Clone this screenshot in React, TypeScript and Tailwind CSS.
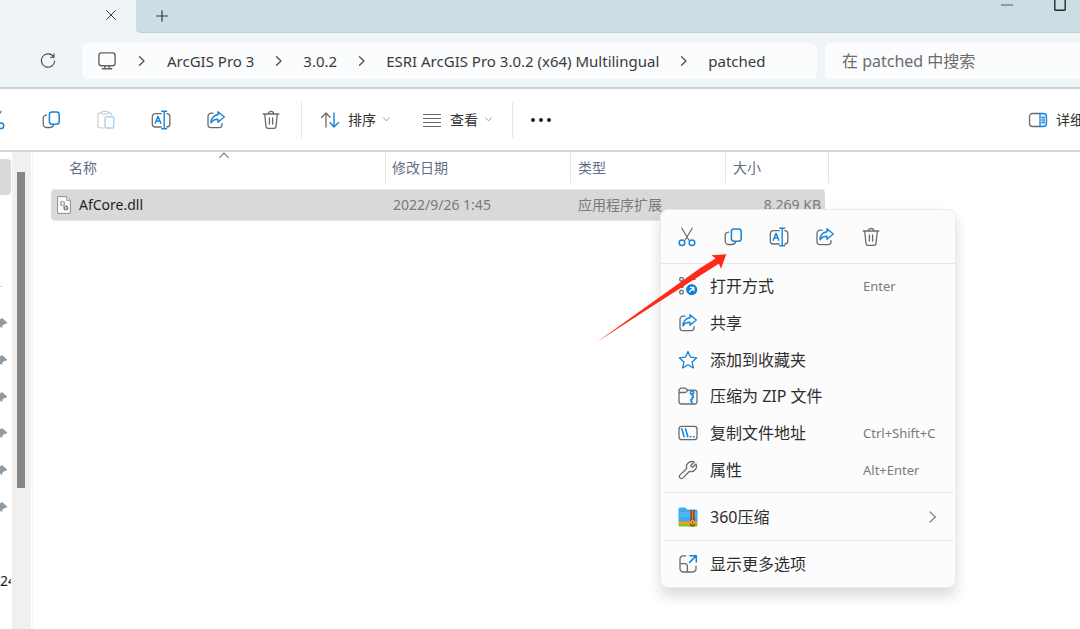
import React from "react";

const GRAY = "#6a6a6a";
const BLUE = "#1583d8";

type IconProps = { children: React.ReactNode; className?: string };

function Icon({ children, className = "size-5" }: IconProps) {
  return (
    <svg
      viewBox="0 0 20 20"
      fill="none"
      stroke={GRAY}
      strokeWidth="1.3"
      strokeLinecap="round"
      strokeLinejoin="round"
      aria-hidden="true"
      className={`shrink-0 ${className}`}
    >
      {children}
    </svg>
  );
}

const CutIcon = () => (
  <Icon>
    <path d="M4.800 1.200 12 13.200M15.200 1.200 8 13.200" strokeWidth="1.200" />
    <circle cx="5" cy="15.800" r="2.800" stroke={BLUE} strokeWidth="1.500" />
    <circle cx="15" cy="15.800" r="2.800" stroke={BLUE} strokeWidth="1.500" />
  </Icon>
);

const CopyIcon = () => (
  <Icon>
    <path d="M5.600 5.200C3.600 5.400 2.200 6.600 2.200 8.600V14a3.500 3.500 0 0 0 3.500 3.500H9c1.900 0 3-.8 3.400-2.200" />
    <rect x="8.400" y="2" width="9.800" height="12.200" rx="2.600" stroke={BLUE} strokeWidth="1.500" />
  </Icon>
);

const PasteIcon = () => (
  <Icon>
    <g stroke="#cfcfcf">
      <path d="M5.500 2.800H3.700A1.700 1.700 0 0 0 2 4.500V16a1.900 1.900 0 0 0 1.900 1.900H7M12.500 2.800h1.300A1.700 1.700 0 0 1 15.500 4.500V5" />
      <rect x="5.600" y="1.300" width="6.800" height="2.800" rx="1.400" />
    </g>
    <rect x="9" y="6.800" width="8.800" height="11.200" rx="1.500" stroke="#a9d2f2" strokeWidth="1.400" />
  </Icon>
);

const RenameIcon = () => (
  <Icon>
    <path d="M10.300 3.600H4.300a3 3 0 0 0-3 3V14a3 3 0 0 0 3 3h6M15.800 3.600a3 3 0 0 1 3 3V14a3 3 0 0 1-3 3" />
    <path d="M4.200 13.300 7 6.300l2.800 7M5.200 11h3.600M10.800 1.200h4.800M10.800 18.800h4.800M13.200 1.200v17.600" stroke={BLUE} strokeWidth="1.400" />
  </Icon>
);

const ShareIcon = () => (
  <Icon>
    <path d="M7 3.200H5.200A3.200 3.200 0 0 0 2 6.400v8A3.200 3.200 0 0 0 5.200 17.600h7.600a3.200 3.200 0 0 0 3.200-3.200v-.8" />
    <path d="M12 1.800 18.300 7 12 12.200V9.300C9 9.300 6.600 10.200 5 12.800 5 8.300 8 5 12 4.700Z" stroke={BLUE} strokeWidth="1.400" />
  </Icon>
);

const TrashIcon = () => (
  <Icon>
    <path d="M2.200 4h15.600M7.400 4c0-1.600 1-2.600 2.600-2.600s2.600 1 2.600 2.600M3.700 4 5 16.600a2 2 0 0 0 2 1.700h6a2 2 0 0 0 2-1.700L16.300 4M8.400 8v6M11.600 8v6" />
  </Icon>
);

const SortIcon = () => (
  <Icon>
    <path d="M6 17V3M1.500 7.500 6 3l4 4.200" />
    <path d="M14 3v14M10 12.500 14 17l4.500-4.500" stroke={BLUE} strokeWidth="1.400" />
  </Icon>
);

const ViewIcon = () => (
  <Icon>
    <path d="M1 4.500h18M1 8.500h18M1 12.500h18M1 16.500h18" strokeLinecap="butt" strokeWidth="1.100" />
  </Icon>
);

const DetailsIcon = () => (
  <Icon>
    <path d="M12 3.500H4.500a3 3 0 0 0-3 3v7a3 3 0 0 0 3 3H12" />
    <path d="M12 3.500h3.500a3 3 0 0 1 3 3v7a3 3 0 0 1-3 3H12ZM14 7.500h2.500M14 10h2.500M14 12.500h2.500" stroke={BLUE} fill="#d8edfc" />
  </Icon>
);

const OpenWithIcon = () => (
  <Icon>
    <rect x="1.800" y="1.600" width="3.400" height="3.400" rx="1" />
    <rect x="1.800" y="8" width="3.400" height="3.400" rx="1" />
    <rect x="1.800" y="14.400" width="3.400" height="3.400" rx="1" />
    <path d="M8.500 3.300h8.500" />
    <circle cx="13.700" cy="13.600" r="5.600" fill="#0f7fd4" stroke="none" />
    <path d="m11.600 15.700 4-4M12.500 11.400h3.300v3.300" stroke="#fff" />
  </Icon>
);

const StarIcon = () => (
  <Icon>
    <path d="m10 1.500 2.500 5.700 6.200.6-4.700 4.100 1.400 6.100L10 14.800 4.600 18 6 11.900 1.300 7.800l6.200-.6Z" stroke={BLUE} />
  </Icon>
);

const ZipIcon = () => (
  <Icon>
    <path d="M1 6.500V4.700a2.500 2.500 0 0 1 2.500-2.500h3.200c1.800 0 1.600 2 3.500 2h6.300A2.500 2.500 0 0 1 19 6.700v8.800a2.500 2.500 0 0 1-2.500 2.500h-13A2.500 2.500 0 0 1 1 15.500ZM1 6.500h6.200c1.500 0 1.700-2.300 3-2.300" />
    <path d="M12.500 5h3v2.800h-3ZM14 8.200v1.600h1.200v1.900H14v1.700h-1.200v1.900H14v2.200" stroke={BLUE} strokeWidth="1.400" />
  </Icon>
);

const PathIcon = () => (
  <Icon>
    <rect x="1" y="3.300" width="18" height="13.400" rx="2.600" />
    <path d="m3.800 5.800 2.300 8M7.500 5.800l2.300 8M12.200 13.700h.6M15.600 13.700h.6" stroke={BLUE} strokeWidth="1.500" />
  </Icon>
);

const WrenchIcon = () => (
  <Icon>
    <path d="M16.200 2.100 13 5.200a.6.6 0 0 0 0 .8l1 1a.6.6 0 0 0 .8 0L17.900 4c1.700 3.700-.9 7.600-4.600 7.600-.7 0-1.300-.1-1.800-.3L5.100 17.900a2 2 0 0 1-3-3L8.700 8.500C7.300 4.200 11.500.1 16.200 2.100Z" />
  </Icon>
);

const ArchiveIcon = () => (
  <Icon>
    <g stroke="none">
      <path d="M.5 2A1.500 1.500 0 0 1 2 .5h5l2 2h9A1.500 1.500 0 0 1 19.500 4v11H.5Z" fill="#3fa9f2" />
      <path d="M.5 5h19v5H.5Z" fill="#5cbcf7" opacity=".6" />
      <path d="M.5 14.600h19v2.400H.5Z" fill="#ff9d12" />
      <path d="M.5 17h19v1a1.500 1.500 0 0 1-1.500 1.500H2A1.500 1.500 0 0 1 .5 18Z" fill="#7cc32e" />
      <path d="M12.300 3h4.400v16.500h-4.400Z" fill="#9a4a16" />
      <path d="M14 3.500h1v9h-1Z" fill="#d98335" />
      <path d="M13.300 13h2.400v1.500h1.300v1.500h-1.300v1.600h-2.400V16H12v-1.500h1.300Z" fill="#ffb938" />
      <path d="M14 14h1v2.400h-1Z" fill="#9a4a16" />
    </g>
  </Icon>
);

const MoreOptionsIcon = () => (
  <Icon>
    <path d="M7.800 1.800H5.400a3.400 3.400 0 0 0-3.400 3.400v9.400A3.400 3.400 0 0 0 5.400 18h9.200a3.400 3.400 0 0 0 3.400-3.400v-2.400M2 9.600h4.600A2.800 2.800 0 0 1 9.400 12.400V18" />
    <path d="M11.500 8.500 18 1.900M12 1.700h6.300V8" stroke={BLUE} strokeWidth="1.500" />
  </Icon>
);

function Chevron({ className }: { className: string }) {
  return (
    <Icon className={className}>
      <path d="M5 1.500 14 10l-9 8.500" stroke="currentColor" strokeWidth="2.400" />
    </Icon>
  );
}

const DllIcon = () => (
  <svg viewBox="0 0 14 18" aria-hidden="true" className="h-[18px] w-[14px] shrink-0">
    <path d="M.6.6h9l3.800 3.800v13H.6Z" fill="#fdfdfd" stroke="#8f8f8f" />
    <path d="M9.600.6v3.800h3.800" fill="#e8e8e8" stroke="#8f8f8f" strokeWidth=".8" />
    <circle cx="5.500" cy="7.500" r="2" fill="none" stroke="#8fa0ae" strokeWidth="1.700" strokeDasharray="1.300 .3" />
    <circle cx="8.800" cy="12" r="1.700" fill="none" stroke="#56626c" strokeWidth="1.600" strokeDasharray="1.200 .3" />
  </svg>
);

const PinIcon = () => (
  <svg viewBox="0 0 8 12" fill="#8f9ca5" aria-hidden="true" className="h-3 w-2">
    <path d="M0 2.500 2 1l5.200 4.600L6 7H4.500L2.500 8.500 2 11 0 9.800Z" />
  </svg>
);

const crumbs = ["ArcGIS Pro 3", "3.0.2", "ESRI ArcGIS Pro 3.0.2 (x64) Multilingual", "patched"];

const tools = [
  { label: "剪切", icon: <CutIcon /> },
  { label: "复制", icon: <CopyIcon /> },
  { label: "粘贴", icon: <PasteIcon /> },
  { label: "重命名", icon: <RenameIcon /> },
  { label: "共享", icon: <ShareIcon /> },
  { label: "删除", icon: <TrashIcon /> },
];

const quickActions = tools.filter((t) => t.label !== "粘贴");

const menuItems = [
  { label: "打开方式", icon: <OpenWithIcon />, keys: "Enter" },
  { label: "共享", icon: <ShareIcon /> },
  { label: "添加到收藏夹", icon: <StarIcon /> },
  { label: "压缩为 ZIP 文件", icon: <ZipIcon /> },
  { label: "复制文件地址", icon: <PathIcon />, keys: "Ctrl+Shift+C" },
  { label: "属性", icon: <WrenchIcon />, keys: "Alt+Enter" },
];

function MenuItem({ label, icon, keys, submenu, className = "" }: { label: string; icon: React.ReactNode; keys?: string; submenu?: boolean; className?: string }) {
  return (
    <button role="menuitem" className={`flex w-full items-center pl-[17px] text-left ${className}`}>
      {icon}
      <span className="ml-3 w-[153px] whitespace-nowrap text-base leading-6 text-[#2e2e2e]">{label}</span>
      {keys && <span className="whitespace-nowrap text-[13px] leading-5 text-[#7a7a7a]">{keys}</span>}
      {submenu && <Chevron className="mr-4 ml-auto size-3 text-[#8a8a8a]" />}
    </button>
  );
}

function ContextMenu() {
  return (
    <div role="menu" className="absolute top-[209px] left-[660px] w-[296px] rounded-lg border border-[#ececec] bg-[#fcfcfc] shadow-[0_8px_14px_rgba(0,0,0,0.15)]">
      <div className="flex h-[54px] items-center border-b border-[#e8e8e8] pl-[3px]">
        {quickActions.map((a) => (
          <button key={a.label} aria-label={a.label} className="flex h-9 w-[46px] items-center justify-center">
            {a.icon}
          </button>
        ))}
      </div>
      <div className="my-1 grid h-[220px] grid-rows-6">
        {menuItems.map((m) => (
          <MenuItem key={m.label} {...m} />
        ))}
      </div>
      <hr className="ml-1 mr-0.5 border-[#e8e8e8]" />
      <MenuItem label="360压缩" icon={<ArchiveIcon />} submenu className="h-[47px]" />
      <hr className="ml-1 mr-0.5 border-[#e8e8e8]" />
      <MenuItem label="显示更多选项" icon={<MoreOptionsIcon />} className="h-[46px]" />
    </div>
  );
}

function TitleBar() {
  return (
    <header className="flex h-[33px] bg-[#eff4f7]">
      <div className="flex w-[136px] shrink-0 items-center justify-end pr-[17px] pb-[3px]">
        <button aria-label="关闭标签页" className="flex size-4 items-center justify-center">
          <svg viewBox="0 0 10 10" className="size-[10px]" stroke="#3c3c3c" strokeWidth="1" aria-hidden="true">
            <path d="m.3.3 9.400 9.400M9.700.3.300 9.700" />
          </svg>
        </button>
      </div>
      <div className="flex grow items-center justify-between rounded-bl-[5px] border-b border-[#bccdd5] bg-[#cddde4] pl-[20px]">
        <button aria-label="新建标签页" className="flex size-3">
          <svg viewBox="0 0 12 12" className="size-3" stroke="#2f2f2f" strokeWidth="1.100" aria-hidden="true">
            <path d="M6 .3v11.400M.3 6h11.400" />
          </svg>
        </button>
        <div className="flex gap-[41px] self-start pr-[14px]">
          <button aria-label="最小化" className="flex h-3 w-3 items-center">
            <svg viewBox="0 0 12 12" className="size-3" stroke="#5a5a5a" aria-hidden="true">
              <path d="M0 5h12" />
            </svg>
          </button>
          <button aria-label="最大化" className="flex size-3">
            <svg viewBox="0 0 12 12" className="size-3" fill="none" stroke="#2a2a2a" strokeWidth="1.400" aria-hidden="true">
              <path d="M.8 0v9.500q0 .8.800.8h8.800q.8 0 .8-.8V0" />
            </svg>
          </button>
        </div>
      </div>
    </header>
  );
}

function AddressRow() {
  return (
    <div className="flex h-[56px] items-center border-b-2 border-[#c8d2da] bg-[#eff4f7] pt-px">
      <button aria-label="刷新" className="flex w-[82px] shrink-0 items-center justify-center pr-[14px] pl-7">
        <svg viewBox="0 0 16 16" className="size-4 shrink-0" fill="none" stroke="#454545" strokeWidth="1.100" strokeLinecap="round" aria-hidden="true">
          <path d="M13.700 4A6.700 6.700 0 1 0 14.700 8M14 .9v3.400h-3.500" />
        </svg>
      </button>
      <nav aria-label="路径" className="flex h-9 grow items-center rounded-md bg-[#fbfcfd] pl-4">
        <svg viewBox="0 0 18 18" className="size-[18px] shrink-0" fill="none" stroke="#626262" strokeWidth="1.400" aria-hidden="true">
          <rect x=".9" y=".9" width="16.200" height="12.800" rx="2.400" />
          <path d="M6.800 13.700v2.800M11.200 13.700v2.800M3.800 16.700h10.400" />
        </svg>
        {crumbs.map((c, i) => (
          <React.Fragment key={c}>
            <span className={i === 0 ? "flex w-[51px] justify-center" : "flex w-[49px] justify-center"}>
              <Chevron className="size-[10px] text-[#4a4a4a]" />
            </span>
            <a href="#" className="whitespace-nowrap text-[15px] leading-6 text-[#3a3a3a]">{c}</a>
          </React.Fragment>
        ))}
      </nav>
      <input
        type="search"
        aria-label="搜索"
        placeholder="在 patched 中搜索"
        className="ml-2 h-9 w-[255px] shrink-0 rounded-l-md bg-[#fbfcfd] pl-[17px] text-base text-[#3a3a3a] outline-none placeholder:text-[#6b6b6b]"
      />
    </div>
  );
}

function ToolBar() {
  return (
    <div className="flex h-[63px] items-center border-b-2 border-[#cdd6da] bg-white text-sm text-[#303030]">
      <div className="-ml-8 flex shrink-0">
        {tools.map((t) => (
          <button key={t.label} aria-label={t.label} disabled={t.label === "粘贴"} className="flex h-9 w-[55px] items-center justify-center">
            {t.icon}
          </button>
        ))}
      </div>
      <div className="ml-[3px] flex h-9 shrink-0 items-center border-x border-[#e6e6e6]">
        <button className="ml-[18px] flex items-center whitespace-nowrap">
          <SortIcon />
          <span className="ml-2">排序</span>
          <Chevron className="ml-[7px] size-[7px] rotate-90 text-[#8a8a8a]" />
        </button>
        <button className="mr-5 ml-8 flex items-center whitespace-nowrap">
          <ViewIcon />
          <span className="ml-2">查看</span>
          <Chevron className="ml-[7px] size-[7px] rotate-90 text-[#8a8a8a]" />
        </button>
      </div>
      <button aria-label="更多" className="ml-[18px] flex shrink-0 gap-1">
        <span className="size-1 rounded-full bg-[#222]" />
        <span className="size-1 rounded-full bg-[#222]" />
        <span className="size-1 rounded-full bg-[#222]" />
      </button>
      <div className="ml-auto w-[52px] shrink-0">
        <button className="flex items-center whitespace-nowrap">
          <DetailsIcon />
          <span className="ml-2">详细信息</span>
        </button>
      </div>
    </div>
  );
}

function Sidebar() {
  return (
    <aside className="flex w-[33px] shrink-0 border-r border-[#f6f6f6]">
      <div className="w-3 shrink-0 overflow-hidden pt-[7px]">
        <div className="h-9 w-[11px] rounded-r-sm bg-[#d9d9d9]" />
        <div className="mt-[91px] h-px w-0.5 bg-[#cfcfcf]" />
        <div className="mt-[18px] grid h-[220px] grid-rows-6 items-center">
          {[0, 1, 2, 3, 4, 5].map((n) => (
            <PinIcon key={n} />
          ))}
        </div>
        <div className="mt-[46px] w-[11px] overflow-hidden text-sm leading-5 text-[#222]">24</div>
      </div>
      <div className="w-[19px] bg-[#f0f0f0] pt-5 pl-[5px]">
        <div className="h-[316px] w-2 bg-[#868686]" />
      </div>
    </aside>
  );
}

const cell = "flex h-8 items-center border-y border-[#e6e6e6] bg-[#d9d9d9] whitespace-nowrap text-[#7a7a7a]";
const head = "h-[31px] border-r border-[#e6e6e6] p-0 text-left font-normal";

function FileTable() {
  return (
    <table className="ml-[18px] w-[778px] shrink-0 table-fixed self-start border-separate border-spacing-0 text-sm text-[#5f6f88]">
      <thead>
        <tr>
          <th className={`${head} w-[335px] pl-[18px]`}>
            <span className="relative block">
              名称
              <Chevron className="absolute -top-2 left-[150px] size-[10px] -rotate-90 text-[#8a8a8a]" />
            </span>
          </th>
          <th className={`${head} w-[185px] pl-[6px]`}>修改日期</th>
          <th className={`${head} w-[155px] pl-[7px]`}>类型</th>
          <th className={`${head} pl-[7px]`}>大小</th>
        </tr>
      </thead>
      <tbody>
        <tr>
          <td className="p-0 pt-[6px]">
            <div className={`${cell} rounded-l-sm pl-[6px]`}>
              <DllIcon />
              <span className="ml-2 text-[#1f1f1f]">AfCore.dll</span>
            </div>
          </td>
          <td className="p-0 pt-[6px]"><div className={`${cell} pl-[7px]`}>2022/9/26 1:45</div></td>
          <td className="p-0 pt-[6px]"><div className={`${cell} pl-[7px]`}>应用程序扩展</div></td>
          <td className="p-0 pt-[6px]"><div className={`${cell} mr-1 justify-end rounded-r-sm pr-1`}>8,269 KB</div></td>
        </tr>
      </tbody>
    </table>
  );
}

export default function App() {
  return (
    <div className="relative flex min-h-screen flex-col overflow-hidden bg-white font-['Noto_Sans','Noto_Sans_CJK_SC',sans-serif]">
      <TitleBar />
      <AddressRow />
      <ToolBar />
      <main className="flex grow">
        <Sidebar />
        <FileTable />
      </main>
      <ContextMenu />
      <svg viewBox="0 0 130 90" aria-hidden="true" className="pointer-events-none absolute top-[253px] left-[597px] h-[90px] w-[130px]">
        <path d="M0 89 53 51 104 14.500 118.500 5.500 114.500 2.200 129.300 1.300 124 15.800 121.800 10.700 108 19.500 54 54Z" fill="#ff2a1a" />
      </svg>
    </div>
  );
}
